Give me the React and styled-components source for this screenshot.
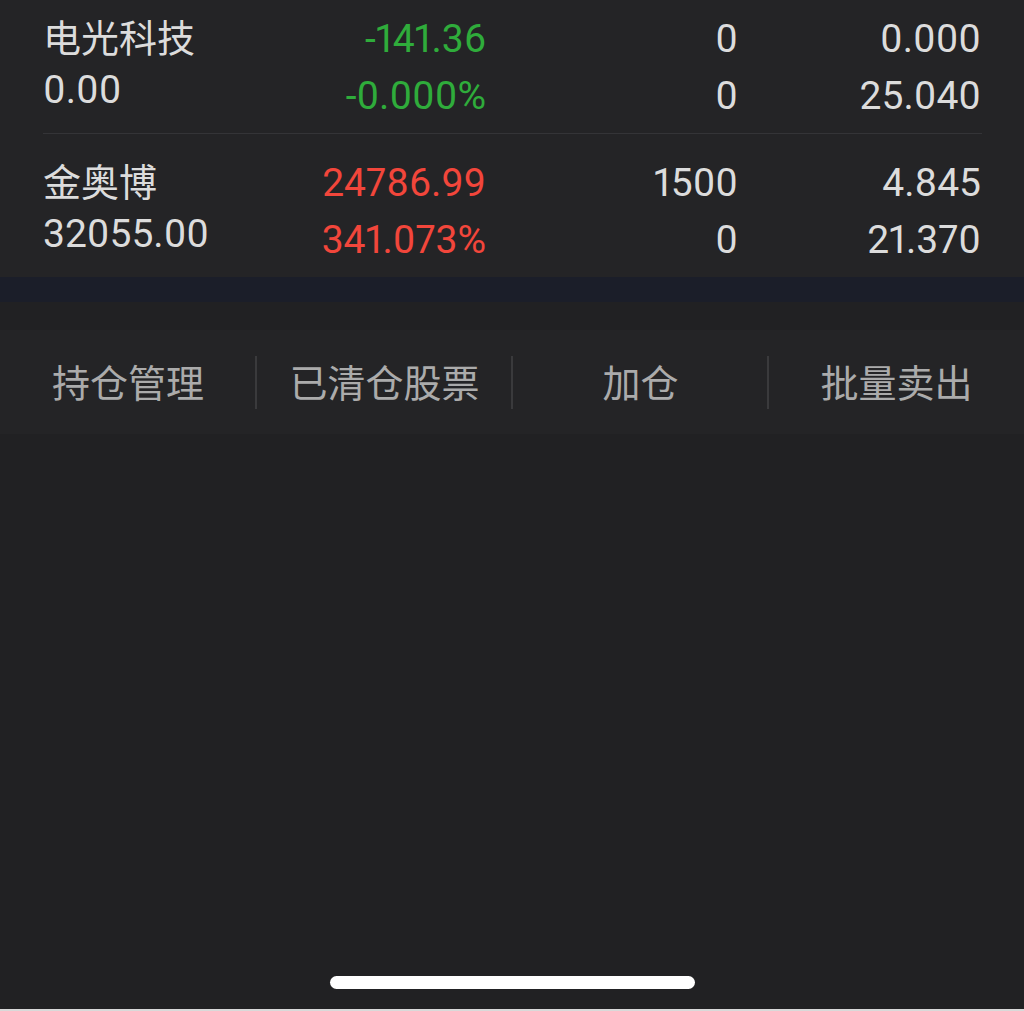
import React from 'react';
import styled, { createGlobalStyle } from 'styled-components';

const GlobalStyle = createGlobalStyle`
    html, body {
        margin: 0;
        padding: 0;
        background: #212123;
    }
    * {
        box-sizing: border-box;
    }
`;

const positions = [
    {
        name: '电光科技',
        marketValue: '0.00',
        profit: '-141.36',
        profitRate: '-0.000%',
        amount: '0',
        available: '0',
        cost: '0.000',
        price: '25.040',
        trend: 'down',
    },
    {
        name: '金奥博',
        marketValue: '32055.00',
        profit: '24786.99',
        profitRate: '341.073%',
        amount: '1500',
        available: '0',
        cost: '4.845',
        price: '21.370',
        trend: 'up',
    },
];

const actions = [ '持仓管理', '已清仓股票', '加仓', '批量卖出' ];

export default function App() {
    return (
        <>
            <GlobalStyle />
            <Screen>
                <ListWrap>
                    <List>
                        { positions.map(item => (
                            <Row key={ item.name }>
                                <NameCell>
                                    <Name>{ item.name }</Name>
                                    <SubValue>{ item.marketValue }</SubValue>
                                </NameCell>
                                <NumCell trend={ item.trend }>
                                    <span>{ item.profit }</span>
                                    <span>{ item.profitRate }</span>
                                </NumCell>
                                <NumCell>
                                    <span>{ item.amount }</span>
                                    <span>{ item.available }</span>
                                </NumCell>
                                <NumCell>
                                    <span>{ item.cost }</span>
                                    <span>{ item.price }</span>
                                </NumCell>
                            </Row>
                        )) }
                    </List>
                </ListWrap>
                <Band />
                <Toolbar>
                    { actions.map((label, i) => (
                        <ToolButton key={ label } divided={ i > 0 }>
                            { label }
                        </ToolButton>
                    )) }
                </Toolbar>
                <Filler>
                    <HomeIndicator />
                </Filler>
            </Screen>
        </>
    );
}

const Screen = styled.div`
    width: 1024px;
    height: 1011px;
    overflow: hidden;
    display: flex;
    flex-direction: column;
    background: #212123;
    font-family: Roboto, "Noto Sans CJK SC", sans-serif;
    font-variant-numeric: proportional-nums;
    border-bottom: 2px solid #d9d9d9;
`;

const ListWrap = styled.div`
    height: 277px;
    overflow: hidden;
    background: #242426;
    flex: 0 0 auto;
`;

const List = styled.div`
    margin-top: -10px;
    padding: 0 42px 0 43px;
`;

const Row = styled.div`
    display: grid;
    grid-template-columns: 200px 243px 252px 243px;
    height: 144px;
    padding-top: 21px;
    border-bottom: 1px solid #343437;
`;

const NameCell = styled.div`
    display: flex;
    flex-direction: column;
    color: #dcdcdc;
`;

const Name = styled.div`
    font-size: 38px;
    line-height: 56px;
    margin-top: -3px;
    font-family: "Noto Sans CJK SC", sans-serif;
`;

const SubValue = styled.div`
    font-size: 39px;
    line-height: 46px;
    margin-top: 3px;
`;

const NumCell = styled.div`
    display: flex;
    flex-direction: column;
    align-items: flex-end;
    font-size: 39px;
    line-height: 57px;
    color: ${ p => p.trend === 'up' ? '#f2463b' : p.trend === 'down' ? '#2fac3b' : '#dcdcdc' };
`;

const Band = styled.div`
    height: 25px;
    flex: 0 0 auto;
    background: #1b1e29;
    margin-bottom: 28px;
`;

const Toolbar = styled.div`
    display: grid;
    grid-template-columns: repeat(4, 1fr);
    align-items: center;
    height: 104px;
    flex: 0 0 auto;
    background: #242426;
`;

const ToolButton = styled.div`
    height: 53px;
    display: flex;
    align-items: center;
    justify-content: center;
    padding-bottom: 3px;
    font-family: "Noto Sans CJK SC", sans-serif;
    font-size: 38px;
    color: #ababab;
    border-left: ${ p => p.divided ? '2px solid #3a3a3c' : 'none' };
    margin-left: ${ p => p.divided ? '-1px' : '0' };
`;

const Filler = styled.div`
    flex: 1 1 auto;
    display: flex;
    align-items: flex-end;
    justify-content: center;
    padding-bottom: 20px;
`;

const HomeIndicator = styled.div`
    width: 365px;
    height: 13px;
    border-radius: 7px;
    background: #ffffff;
`;
